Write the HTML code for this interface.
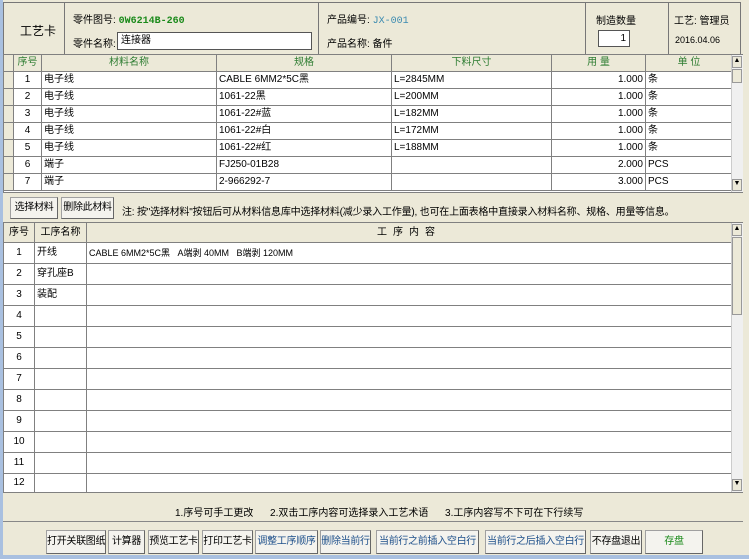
<!DOCTYPE html><html><head><meta charset="utf-8"><style>
*{box-sizing:border-box;margin:0;padding:0}
body{width:749px;height:559px;background:#ece9d8;position:relative;overflow:hidden;font-family:"Liberation Sans","Noto Sans CJK SC",sans-serif;font-size:11px;color:#000}
.a{position:absolute;white-space:nowrap}
.b{border:1px solid #808080}
table{border-collapse:collapse;position:absolute;table-layout:fixed;background:#fff}
td{border:1px solid #808080;height:17px;padding:0 2px;white-space:nowrap;overflow:hidden;font-size:10px;line-height:14px;vertical-align:middle}
th{border:1px solid #808080;background:#ece9d8;font-weight:normal;color:#2e7d32;font-size:10px;line-height:14px}
.btn{position:absolute;top:530px;height:24px;background:#f4f3ee;border:1px solid #a0a0a0;border-right-color:#666;border-bottom-color:#666;font-size:10px;text-align:center;line-height:22px;white-space:nowrap;overflow:hidden;letter-spacing:-0.3px}
.sb{position:absolute;background:#f0f0f0;border-left:1px solid #ccc}
</style></head><body>
<div class="a" style="left:0;top:0;width:3px;height:559px;background:#a9c0e0"></div>
<div class="a" style="left:0;top:555px;width:749px;height:4px;background:#a9c0e0"></div>
<!-- header -->
<div class="a b" style="left:3px;top:2px;width:738px;height:53px;border-color:#777"></div>
<div class="a" style="left:64px;top:2px;width:1px;height:52px;background:#777"></div>
<div class="a" style="left:318px;top:2px;width:1px;height:52px;background:#777"></div>
<div class="a" style="left:585px;top:2px;width:1px;height:52px;background:#777"></div>
<div class="a" style="left:668px;top:2px;width:1px;height:52px;background:#777"></div>
<div class="a" style="left:20px;top:22px;font-size:12px">工艺卡</div>
<div class="a" style="left:73px;top:11px;font-size:10px">零件图号: <b style="color:#1a8a1a;font-family:'Liberation Mono',monospace">0W6214B-260</b></div>
<div class="a" style="left:73px;top:35px;font-size:10px">零件名称:</div>
<div class="a" style="left:117px;top:32px;width:195px;height:18px;background:#fff;border:1px solid #555;padding-left:3px;line-height:16px;font-size:10px">连接器</div>
<div class="a" style="left:327px;top:11px;font-size:10px">产品编号: <span style="color:#3a8ab0;font-family:'Liberation Mono',monospace;font-size:10px">JX-001</span></div>
<div class="a" style="left:327px;top:35px;font-size:10px">产品名称: 备件</div>
<div class="a" style="left:596px;top:12px;font-size:10px">制造数量</div>
<div class="a" style="left:598px;top:30px;width:32px;height:17px;background:#fff;border:1px solid #555;text-align:right;padding-right:3px;font-size:10px;line-height:15px">1</div>
<div class="a" style="left:674px;top:12px;font-size:10px">工艺: 管理员</div>
<div class="a" style="left:675px;top:35px;font-size:9px">2016.04.06</div>
<!-- materials -->
<div class="a" style="left:3px;top:54px;width:740px;height:139px;background:#fff;border:1px solid #808080"></div>
<table style="left:3px;top:54px;width:729px">
<colgroup><col style="width:10px"><col style="width:28px"><col style="width:175px"><col style="width:175px"><col style="width:160px"><col style="width:94px"><col style="width:87px"></colgroup>
<tr><th style="height:17px"></th><th>序号</th><th>材料名称</th><th>规格</th><th>下料尺寸</th><th>用 量</th><th>单 位</th></tr>
<tr><th></th><td align=center>1</td><td>电子线</td><td>CABLE 6MM2*5C黑</td><td>L=2845MM</td><td align=right>1.000</td><td>条</td></tr>
<tr><th></th><td align=center>2</td><td>电子线</td><td>1061-22黑</td><td>L=200MM</td><td align=right>1.000</td><td>条</td></tr>
<tr><th></th><td align=center>3</td><td>电子线</td><td>1061-22#蓝</td><td>L=182MM</td><td align=right>1.000</td><td>条</td></tr>
<tr><th></th><td align=center>4</td><td>电子线</td><td>1061-22#白</td><td>L=172MM</td><td align=right>1.000</td><td>条</td></tr>
<tr><th></th><td align=center>5</td><td>电子线</td><td>1061-22#红</td><td>L=188MM</td><td align=right>1.000</td><td>条</td></tr>
<tr><th></th><td align=center>6</td><td>端子</td><td>FJ250-01B28</td><td></td><td align=right>2.000</td><td>PCS</td></tr>
<tr><th></th><td align=center>7</td><td>端子</td><td>2-966292-7</td><td></td><td align=right>3.000</td><td>PCS</td></tr>
</table>
<div class="sb" style="left:731px;top:55px;width:12px;height:137px"></div>
<div class="a" style="left:732px;top:56px;width:10px;height:12px;background:#ece9d8;border:1px solid #999;font-size:7px;text-align:center">▲</div>
<div class="a" style="left:732px;top:69px;width:10px;height:14px;background:#ece9d8;border:1px solid #999"></div>
<div class="a" style="left:732px;top:179px;width:10px;height:12px;background:#ece9d8;border:1px solid #999;font-size:7px;text-align:center">▼</div>
<div class="btn" style="left:10px;top:197px;width:48px;height:22px;line-height:20px">选择材料</div>
<div class="btn" style="left:61px;top:197px;width:53px;height:22px;line-height:20px">删除此材料</div>
<div class="a" style="left:122px;top:203px;font-size:10px;letter-spacing:-0.2px">注: 按"选择材料"按钮后可从材料信息库中选择材料(减少录入工作量), 也可在上面表格中直接录入材料名称、规格、用量等信息。</div>
<!-- process -->
<div class="a" style="left:3px;top:222px;width:740px;height:271px;background:#fff;border:1px solid #808080"></div>
<table style="left:3px;top:222px;width:729px">
<colgroup><col style="width:31px"><col style="width:52px"><col></colgroup>
<tr><th style="height:20px;color:#000">序号</th><th style="color:#000">工序名称</th><th style="color:#000;letter-spacing:6px">工序内容</th></tr>
<tr><td style="height:21px" align=center>1</td><td>开线</td><td style="font-size:9px">CABLE 6MM2*5C黑 &nbsp; A端剥 40MM &nbsp; B端剥 120MM</td></tr>
<tr><td style="height:21px" align=center>2</td><td>穿孔座B</td><td></td></tr>
<tr><td style="height:21px" align=center>3</td><td>装配</td><td></td></tr>
<tr><td style="height:21px" align=center>4</td><td></td><td></td></tr>
<tr><td style="height:21px" align=center>5</td><td></td><td></td></tr>
<tr><td style="height:21px" align=center>6</td><td></td><td></td></tr>
<tr><td style="height:21px" align=center>7</td><td></td><td></td></tr>
<tr><td style="height:21px" align=center>8</td><td></td><td></td></tr>
<tr><td style="height:21px" align=center>9</td><td></td><td></td></tr>
<tr><td style="height:21px" align=center>10</td><td></td><td></td></tr>
<tr><td style="height:21px" align=center>11</td><td></td><td></td></tr>
<tr><td style="height:19px" align=center>12</td><td></td><td></td></tr>
</table>
<div class="sb" style="left:731px;top:223px;width:12px;height:269px"></div>
<div class="a" style="left:732px;top:224px;width:10px;height:12px;background:#ece9d8;border:1px solid #999;font-size:7px;text-align:center">▲</div>
<div class="a" style="left:732px;top:237px;width:10px;height:78px;background:#ece9d8;border:1px solid #999"></div>
<div class="a" style="left:732px;top:479px;width:10px;height:12px;background:#ece9d8;border:1px solid #999;font-size:7px;text-align:center">▼</div>
<div class="a" style="left:175px;top:504px;font-size:10px">1.序号可手工更改 &nbsp;&nbsp;&nbsp;&nbsp; 2.双击工序内容可选择录入工艺术语 &nbsp;&nbsp;&nbsp;&nbsp; 3.工序内容写不下可在下行续写</div>
<div class="a" style="left:3px;top:521px;width:740px;height:1px;background:#888"></div>
<div class="btn" style="left:46px;width:60px">打开关联图纸</div>
<div class="btn" style="left:108px;width:37px">计算器</div>
<div class="btn" style="left:148px;width:51px">预览工艺卡</div>
<div class="btn" style="left:202px;width:51px">打印工艺卡</div>
<div class="btn" style="left:255px;width:63px;color:#1d4f8a">调整工序顺序</div>
<div class="btn" style="left:320px;width:51px;color:#1d4f8a">删除当前行</div>
<div class="btn" style="left:376px;width:103px;color:#1d4f8a">当前行之前插入空白行</div>
<div class="btn" style="left:485px;width:101px;color:#1d4f8a">当前行之后插入空白行</div>
<div class="btn" style="left:590px;width:52px">不存盘退出</div>
<div class="btn" style="left:645px;width:58px;color:#1a8a1a">存盘</div>
</body></html>
